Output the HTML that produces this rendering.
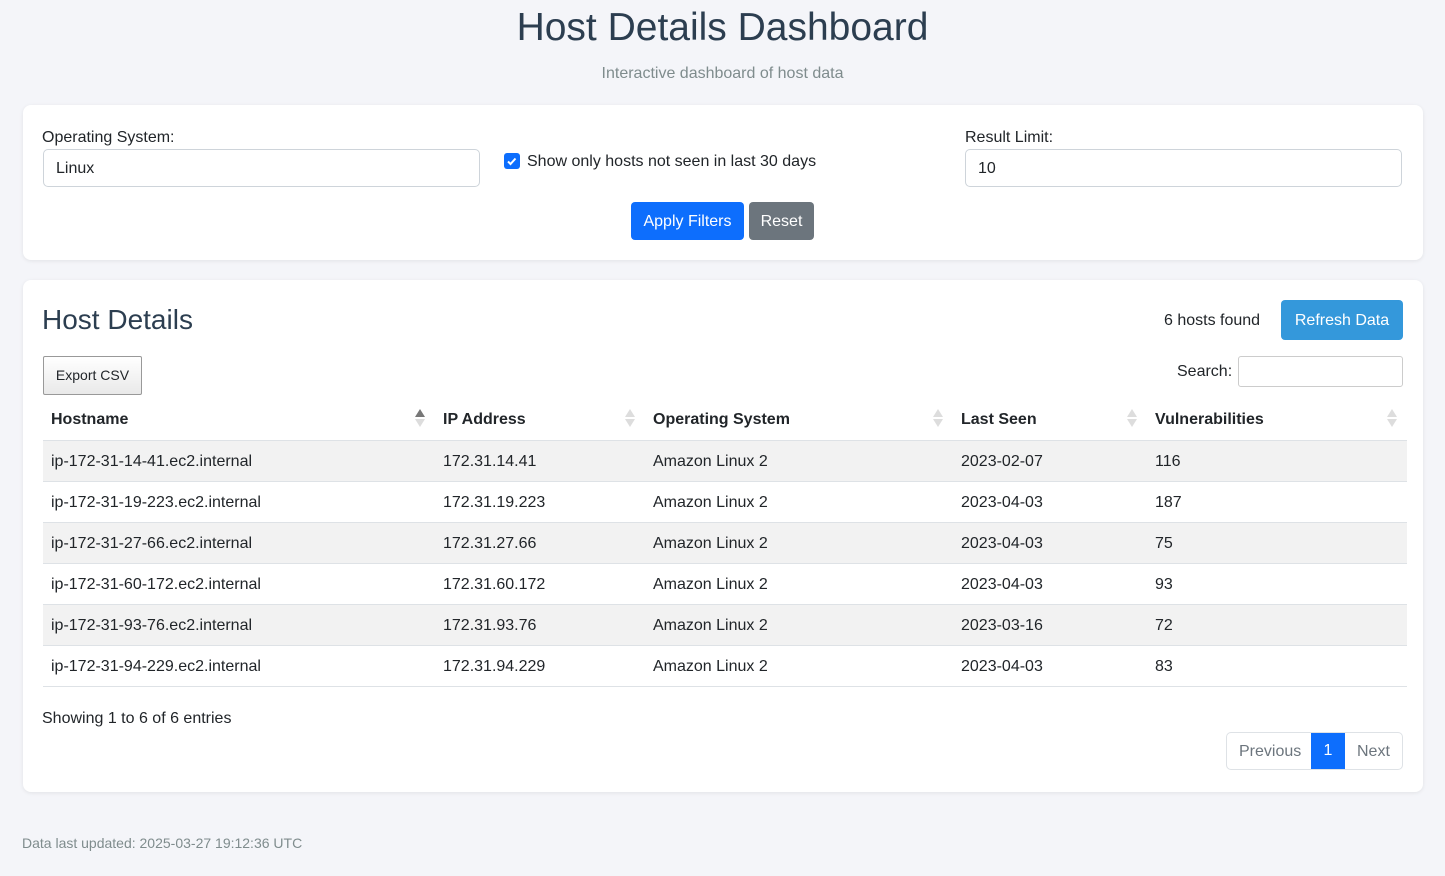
<!DOCTYPE html>
<html><head><meta charset="utf-8"><style>
*{box-sizing:border-box;margin:0;padding:0}
body{width:1445px;height:876px;background:#f4f5f9;font-family:"Liberation Sans",Arial,sans-serif;color:#212529;position:relative;overflow:hidden;font-size:16px}
.a{position:absolute;white-space:nowrap}
h1{position:absolute;left:0;width:1445px;text-align:center;top:6px;font-size:39px;font-weight:400;color:#2c3e50}
.card{position:absolute;left:23px;width:1400px;background:#fff;border-radius:8px;box-shadow:0 1px 4px rgba(0,0,0,.08)}
.inp{position:absolute;border:1px solid #ced4da;border-radius:5px;background:#fff;padding-left:12px;line-height:38px}
.btn{position:absolute;color:#fff;border-radius:4px;text-align:center}
table{position:absolute;left:43px;top:399px;width:1364px;border-collapse:collapse}
th{text-align:left;font-weight:700;height:41px;padding-left:8px;padding-top:2px;border-bottom:1px solid #dee2e6;position:relative}
td{height:41px;padding-left:8px;padding-top:2px;border-bottom:1px solid #dee2e6}
tbody tr:nth-child(odd){background:#f2f2f2}
.s{position:absolute;right:10px;top:10px;width:10px;height:18px}
.s:before{content:"";position:absolute;left:0;top:0;border:5px solid transparent;border-bottom:8px solid #ddd;border-top:0}
.s:after{content:"";position:absolute;left:0;top:10px;border:5px solid transparent;border-top:8px solid #ddd;border-bottom:0}
.s.up:before{border-bottom-color:#777}
</style></head><body>
<h1>Host Details Dashboard</h1>
<div class="a" style="left:0;width:1445px;text-align:center;top:65px;color:#7f8c8d;font-size:16px">Interactive dashboard of host data</div>

<div class="card" style="top:105px;height:155px"></div>
<div class="a" style="left:42px;top:129px">Operating System:</div>
<div class="inp" style="left:43px;top:149px;width:437px;height:38px">Linux</div>
<div class="a" style="left:504px;top:153px;width:16px;height:16px;background:#0d6efd;border-radius:3px"><svg width="16" height="16"><path d="M4 8.5l2.5 2.5 5-5.5" stroke="#fff" stroke-width="2" fill="none"/></svg></div>
<div class="a" style="left:527px;top:153px">Show only hosts not seen in last 30 days</div>
<div class="a" style="left:965px;top:129px">Result Limit:</div>
<div class="inp" style="left:965px;top:149px;width:437px;height:38px">10</div>
<div class="btn" style="left:631px;top:202px;width:113px;height:38px;line-height:40px;background:#0d6efd">Apply Filters</div>
<div class="btn" style="left:749px;top:202px;width:65px;height:38px;line-height:40px;background:#6c757d">Reset</div>

<div class="card" style="top:280px;height:512px"></div>
<div class="a" style="left:42px;top:304px;font-size:28px;color:#2c3e50">Host Details</div>
<div class="a" style="left:1164px;top:312px">6 hosts found</div>
<div class="btn" style="left:1281px;top:300px;width:122px;height:40px;line-height:42px;background:#3498db">Refresh Data</div>
<div class="a" style="left:43px;top:356px;width:99px;height:39px;border:1px solid #999;border-radius:2px;background:linear-gradient(#fff,#e9e9e9);font-size:14px;text-align:center;line-height:37px">Export CSV</div>
<div class="a" style="left:1177px;top:363px">Search:</div>
<div class="a" style="left:1238px;top:356px;width:165px;height:31px;border:1px solid #ccc;border-radius:3px"></div>

<table>
<thead><tr><th style="width:392px">Hostname<span class="s up"></span></th><th style="width:210px">IP Address<span class="s"></span></th><th style="width:308px">Operating System<span class="s"></span></th><th style="width:194px">Last Seen<span class="s"></span></th><th>Vulnerabilities<span class="s"></span></th></tr></thead>
<tbody>
<tr><td>ip-172-31-14-41.ec2.internal</td><td>172.31.14.41</td><td>Amazon Linux 2</td><td>2023-02-07</td><td>116</td></tr>
<tr><td>ip-172-31-19-223.ec2.internal</td><td>172.31.19.223</td><td>Amazon Linux 2</td><td>2023-04-03</td><td>187</td></tr>
<tr><td>ip-172-31-27-66.ec2.internal</td><td>172.31.27.66</td><td>Amazon Linux 2</td><td>2023-04-03</td><td>75</td></tr>
<tr><td>ip-172-31-60-172.ec2.internal</td><td>172.31.60.172</td><td>Amazon Linux 2</td><td>2023-04-03</td><td>93</td></tr>
<tr><td>ip-172-31-93-76.ec2.internal</td><td>172.31.93.76</td><td>Amazon Linux 2</td><td>2023-03-16</td><td>72</td></tr>
<tr><td>ip-172-31-94-229.ec2.internal</td><td>172.31.94.229</td><td>Amazon Linux 2</td><td>2023-04-03</td><td>83</td></tr>
</tbody></table>

<div class="a" style="left:42px;top:710px">Showing 1 to 6 of 6 entries</div>
<div class="a" style="left:1226px;top:732px;width:177px;height:38px;border:1px solid #dee2e6;border-radius:5px;overflow:hidden;color:#6c757d;line-height:38px">
<span class="a" style="left:12px">Previous</span>
<span class="a" style="left:84px;top:-1px;width:34px;height:38px;background:#0d6efd;color:#fff;text-align:center">1</span>
<span class="a" style="left:130px">Next</span></div>

<div class="a" style="left:22px;top:835px;font-size:14px;color:#7f8c8d">Data last updated: 2025-03-27 19:12:36 UTC</div>
</body></html>
